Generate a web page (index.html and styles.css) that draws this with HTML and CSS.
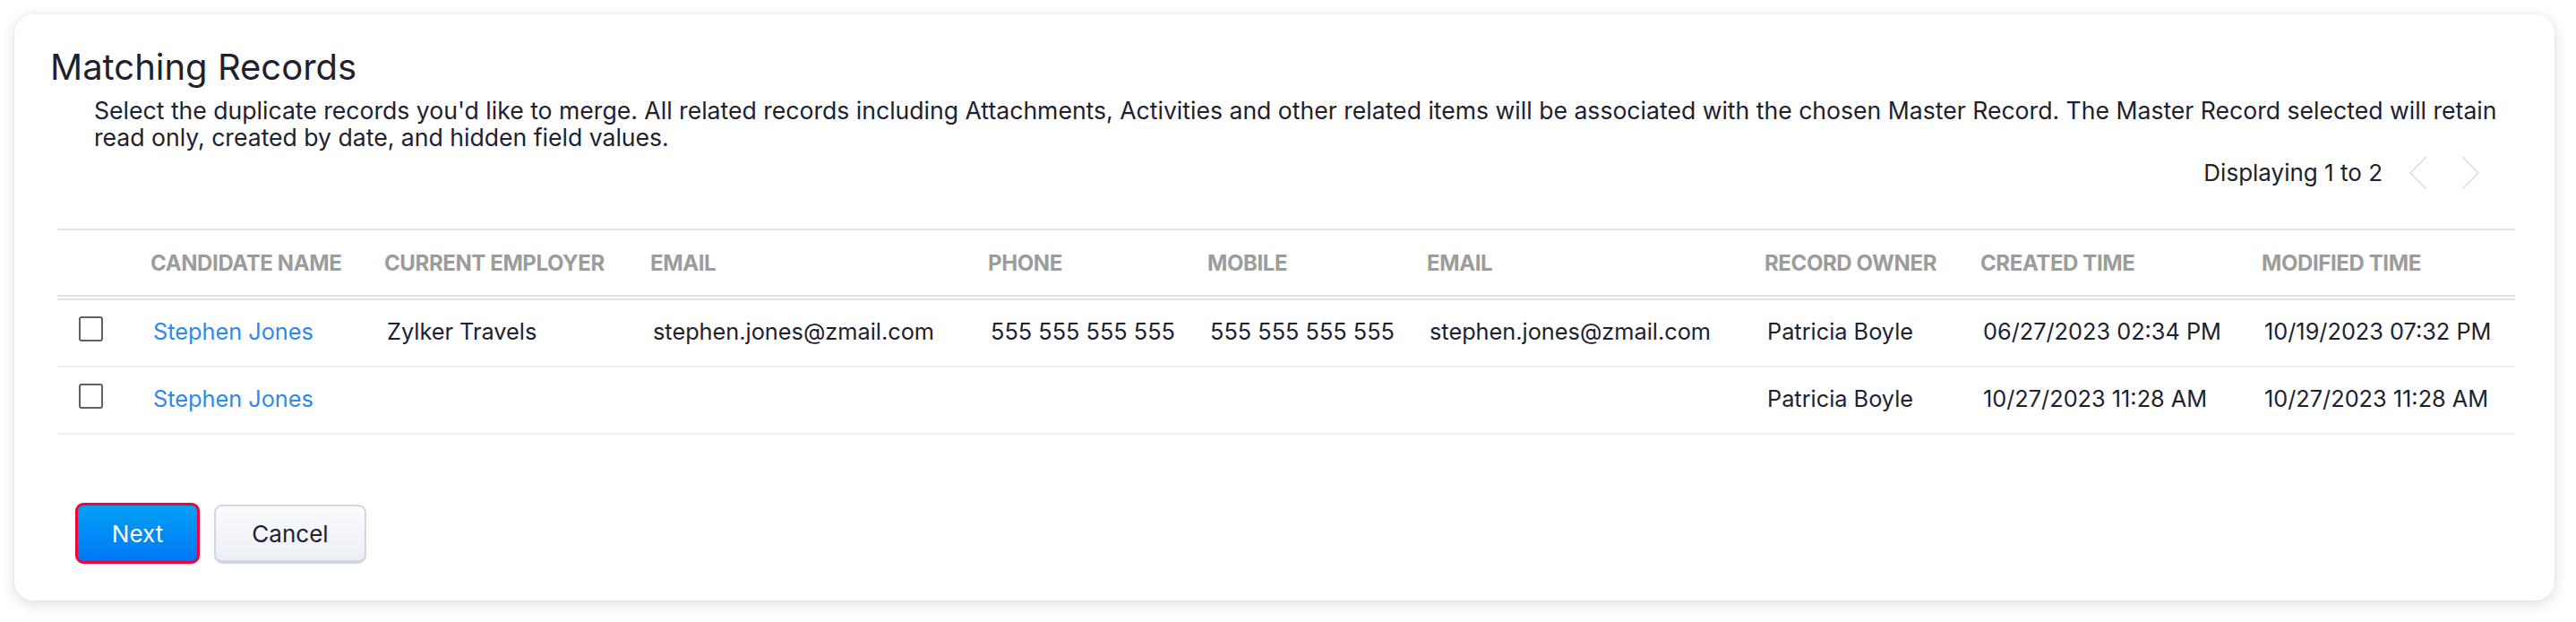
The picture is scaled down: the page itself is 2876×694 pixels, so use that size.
FILE: index.html
```html
<!DOCTYPE html>
<html lang="en">
<head>
<meta charset="utf-8">
<title>Matching Records</title>
<link rel="stylesheet" href="styles.css">
</head>
<body>
<div class="card">
  <h1 class="title">Matching Records</h1>
  <p class="desc">Select the duplicate records you'd like to merge. All related records including Attachments, Activities and other related items will be associated with the chosen Master Record. The Master Record selected will retain<br>read only, created by date, and hidden field values.</p>
  <div class="pager">
    <span class="pager-text">Displaying 1 to 2</span>
    <svg class="chev" width="20" height="38" viewBox="0 0 20 38"><polyline points="19,1 1,19 19,37" fill="none" stroke="#dcdcdc" stroke-width="1.5"/></svg>
    <svg class="chev" width="20" height="38" viewBox="0 0 20 38"><polyline points="1,1 19,19 1,37" fill="none" stroke="#dcdcdc" stroke-width="1.5"/></svg>
  </div>
  <table class="grid">
    <colgroup>
      <col class="c-check"><col class="c-name"><col class="c-emp"><col class="c-email"><col class="c-phone"><col class="c-mobile"><col class="c-email2"><col class="c-owner"><col class="c-created"><col class="c-modified">
    </colgroup>
    <thead>
      <tr>
        <th></th>
        <th>Candidate Name</th>
        <th>Current Employer</th>
        <th>Email</th>
        <th>Phone</th>
        <th>Mobile</th>
        <th>Email</th>
        <th>Record Owner</th>
        <th>Created Time</th>
        <th>Modified Time</th>
      </tr>
    </thead>
    <tbody>
      <tr>
        <td class="check-cell"><span class="checkbox"></span></td>
        <td><a class="link" href="#">Stephen Jones</a></td>
        <td>Zylker Travels</td>
        <td>stephen.jones@zmail.com</td>
        <td>555 555 555 555</td>
        <td>555 555 555 555</td>
        <td>stephen.jones@zmail.com</td>
        <td>Patricia Boyle</td>
        <td>06/27/2023 02:34 PM</td>
        <td>10/19/2023 07:32 PM</td>
      </tr>
      <tr>
        <td class="check-cell"><span class="checkbox"></span></td>
        <td><a class="link" href="#">Stephen Jones</a></td>
        <td></td>
        <td></td>
        <td></td>
        <td></td>
        <td></td>
        <td>Patricia Boyle</td>
        <td>10/27/2023 11:28 AM</td>
        <td>10/27/2023 11:28 AM</td>
      </tr>
    </tbody>
  </table>
  <div class="actions">
    <button class="btn btn-primary" type="button">Next</button>
    <button class="btn btn-secondary" type="button">Cancel</button>
  </div>
</div>
</body>
</html>
```
FILE: styles.css
```css
html, body {
  margin: 0;
  padding: 0;
  background: #ffffff;
}

body {
  font-family: "Inter", "Open Sans", "Liberation Sans", sans-serif;
  color: #1d2130;
  padding: 16px 24px 24px 16px;
}

.card {
  background: #ffffff;
  border-radius: 21px;
  box-shadow: 0 4px 16px rgba(0, 0, 0, 0.13), 0 0 4px rgba(0, 0, 0, 0.05);
  padding: 35px 44px 41px 48px;
}

.title {
  margin: 0 0 0 -8px;
  font-size: 40px;
  line-height: 48px;
  font-weight: 400;
  color: #1d2130;
}

.desc {
  margin: 9px 0 0 41px;
  font-size: 26.6px;
  line-height: 30px;
  white-space: nowrap;
  color: #1d2130;
}

.pager {
  display: flex;
  justify-content: flex-end;
  align-items: center;
  height: 38px;
  margin-top: 6px;
  padding-right: 40px;
}

.pager-text {
  font-size: 26px;
  line-height: 30px;
  margin-right: 30px;
}

.chev + .chev {
  margin-left: 38px;
}

.grid {
  margin-top: 43px;
  width: 2744px;
  border-collapse: collapse;
  table-layout: fixed;
}

.c-check { width: 104px; }
.c-name { width: 261px; }
.c-emp { width: 297px; }
.c-email { width: 377px; }
.c-phone { width: 245px; }
.c-mobile { width: 245px; }
.c-email2 { width: 377px; }
.c-owner { width: 241px; }
.c-created { width: 314px; }
.c-modified { width: 283px; }

.grid thead tr {
  border-top: 2px solid #e4e4e4;
}

.grid th {
  height: 72px;
  padding: 0;
  text-align: left;
  vertical-align: middle;
  font-size: 24px;
  font-weight: 700;
  letter-spacing: -0.4px;
  text-transform: uppercase;
  color: #9c9c9c;
  border-bottom: 6px double #e2e2e2;
  white-space: nowrap;
}

.grid td {
  padding: 19px 0 23px 3px;
  line-height: 31px;
  vertical-align: middle;
  font-size: 25.3px;
  color: #1d2130;
  border-bottom: 2px solid #f0f0f0;
  white-space: nowrap;
}

.grid td.check-cell {
  padding: 17px 0 26px 24px;
}

.checkbox {
  display: block;
  width: 23px;
  height: 24px;
  border: 2px solid #5a6172;
  border-radius: 3px;
  background: #fff;
}

.link {
  color: #2d88ef;
  text-decoration: none;
}

.actions {
  display: flex;
  align-items: flex-end;
  gap: 16px;
  margin-top: 76px;
  margin-left: 20px;
}

.btn {
  font-family: "Inter", "Open Sans", "Liberation Sans", sans-serif;
  font-size: 26px;
  border-radius: 9px;
  cursor: pointer;
  padding: 0;
}

.btn-primary {
  width: 139px;
  height: 68px;
  color: #ffffff;
  background: linear-gradient(#02a1f3, #0177f7);
  border: 3px solid #f5003a;
}

.btn-secondary {
  width: 170px;
  height: 66px;
  color: #1d2130;
  background: linear-gradient(#fafbfd, #eceff6);
  border: 2px solid #d3d7e1;
  border-bottom-width: 4px;
}
```
